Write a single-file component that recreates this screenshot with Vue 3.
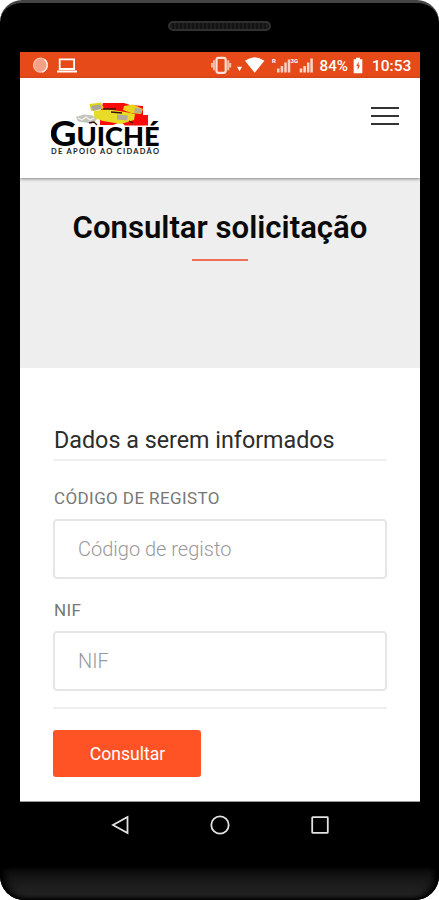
<script setup>
import { ref } from 'vue'

const fields = [
  { id: 'codigo', label: 'CÓDIGO DE REGISTO', placeholder: 'Código de registo' },
  { id: 'nif', label: 'NIF', placeholder: 'NIF' },
]
const values = ref({ codigo: '', nif: '' })
</script>

<template>
  <div class="phone">
    <div class="top-bezel">
      <div class="speaker"></div>
    </div>

    <div class="screen">
      <div class="status">
        <svg class="status-left" width="60" height="26" viewBox="0 0 60 26">
          <circle cx="20.5" cy="13.2" r="7" fill="#f3a288" stroke="#f6c0ae" stroke-width="1.2" />
          <path d="M24.5 7.6a7.2 7.2 0 0 1-2.600 12.500" fill="none" stroke="#ffe9e2" stroke-width="1.4" />
          <path d="M39.700 7.400h14.400v9.600H39.700z" fill="none" stroke="#fff" stroke-width="1.800" />
          <path d="M37 19.600h20" stroke="#fff" stroke-width="2" />
        </svg>
        <svg class="status-right" width="106" height="26" viewBox="0 0 106 26">
          <rect x="6.500" y="5.800" width="9.200" height="15" rx="2" fill="none" stroke="#fbe0d7" stroke-width="2.200" />
          <path d="M4 8.300v10M18.200 8.300v10M2 11v4.500M20.200 11v4.500" stroke="#f7b9a4" stroke-width="2" />
          <path d="M27 14.800h5l-2.500 4.500z" fill="#fff" />
          <path d="M35 8.800q9.700-7 19.400 0L44.700 20.800z" fill="#fff" />
          <text x="62" y="11" class="tiny">R</text>
          <path d="M68.300 20.500v-4M71.900 20.500v-6.500M75.500 20.500V10.500M79 20.500V7.500" stroke="#fad2c5" stroke-width="2.500" />
          <text x="80.500" y="11" class="tiny">3G</text>
          <path d="M91 20.500v-4M94.600 20.500v-6.500M98.200 20.500V10.500M101.600 20.500V6.500" stroke="#fad8cc" stroke-width="2.500" />
        </svg>
        <span class="percent">84%</span>
        <svg class="battery" width="10" height="17" viewBox="0 0 10 17">
          <path d="M3 .8h4v1.500h2.300v14H.700v-14H3z" fill="#fff" />
          <path d="M5.800 4.500 3.200 9h1.500v4L7 8.200H5.500z" fill="#e64a19" />
        </svg>
        <span class="clock">10:53</span>
      </div>

      <header class="header">
        <svg class="logo" width="112" height="58" viewBox="0 0 112 58" role="img" aria-label="Guiché de apoio ao cidadão">
          <path d="M52 3h21l6 2 13 1v9h5v10.500H74L70 22l-8 3H49V12z" fill="#fb0b08" />
          <path d="M38.500 4 50 2.500l3 6-13 2.500z" fill="#e0d41c" />
          <path d="m43 11 13-2 18 3 10 2-1 6-13 4-18-3-9-3z" fill="#e9dc28" />
          <path d="m73 6 9-1.500L92 9l-2 5-10-1-8-3z" fill="#ecd41c" />
          <path d="m40 6 9-1.500 2 4-9 2.500z" fill="#a9a699" />
          <path d="m66 14.500 11 1-1 5-10-1zM84 7.500l7 1.500-1 4.500-7-1z" fill="#b4ae98" />
          <path d="m25 17 8-2.500 9 1 4 4-5 4-14-2z" fill="#c4c4bb" />
          <path d="m27 18 4 2 4-3 4 3 4-2" fill="none" stroke="#f4f4ec" stroke-width="1.300" />
          <path d="M52 9h13M38 23l5-1 3 3M60 12l11 1M78 21l4 2" stroke="#351509" stroke-width="1.300" fill="none" />
          <text x="-1.500" y="46" class="logo-g" textLength="27" lengthAdjust="spacingAndGlyphs">G</text>
          <text x="25.500" y="46" class="logo-name" textLength="83" lengthAdjust="spacingAndGlyphs">UICHÉ</text>
          <text x="0" y="54.200" class="logo-tag" textLength="108" lengthAdjust="spacing">DE APOIO AO CIDADÃO</text>
        </svg>
        <button class="menu" type="button" aria-label="Menu">
          <i></i><i></i><i></i>
        </button>
      </header>

      <section class="hero">
        <h1>Consultar solicitação</h1>
        <div class="rule"></div>
      </section>

      <form class="form" @submit.prevent>
        <h2>Dados a serem informados</h2>
        <div v-for="f in fields" :key="f.id" class="field">
          <label :for="f.id">{{ f.label }}</label>
          <input :id="f.id" v-model="values[f.id]" type="text" :placeholder="f.placeholder" />
        </div>
        <div class="divider"></div>
        <button class="submit" type="submit">Consultar</button>
      </form>
    </div>

    <nav class="nav">
      <svg width="20" height="20" viewBox="0 0 20 20"><path d="M17.500 2v16L3 10z" /></svg>
      <svg width="20" height="20" viewBox="0 0 20 20"><circle cx="10" cy="10" r="8.700" /></svg>
      <svg width="20" height="20" viewBox="0 0 20 20"><rect x="2.200" y="2.200" width="15.600" height="15.600" rx=".5" /></svg>
    </nav>
    <div class="chin"></div>
  </div>
</template>

<style>
body {
  background: #fff;
}
</style>

<style scoped>
.phone {
  box-sizing: border-box;
  width: 439px;
  height: 900px;
  display: flex;
  flex-direction: column;
  background: #000;
  border-radius: 22px 22px 24px 24px;
  border-top: 3px solid #444;
  overflow: hidden;
  font-family: Roboto, "Liberation Sans", sans-serif;
}
.top-bezel {
  height: 49px;
  flex: none;
  display: flex;
  justify-content: center;
  align-items: flex-start;
  padding-top: 18px;
  box-sizing: border-box;
}
.speaker {
  box-sizing: border-box;
  width: 103px;
  height: 10px;
  border: 2px solid #303030;
  border-radius: 5px;
  background: repeating-linear-gradient(90deg, #1e1e1e 0 2px, #141414 2px 4px);
}
.screen {
  box-sizing: border-box;
  flex: none;
  width: 400px;
  height: 750px;
  margin-left: 20px;
  background: #fff;
  border-bottom: 1px solid #999;
  display: flex;
  flex-direction: column;
}
.status {
  height: 26px;
  flex: none;
  background: #e64a19;
  color: #fff;
  display: flex;
  align-items: center;
  font-size: 15.500px;
  line-height: 26px;
  font-weight: 500;
}
.status-right {
  margin-left: 130px;
}
.tiny {
  font: 700 6px Roboto, sans-serif;
  fill: #fff;
}
.percent {
  margin-left: 3.500px;
  width: 33.500px;
  font-size: 15.200px;
  padding-top: 2px;
}
.clock {
  margin-left: 9px;
  padding-top: 2px;
}
.header {
  box-sizing: border-box;
  height: 100px;
  flex: none;
  display: flex;
  justify-content: space-between;
  align-items: flex-start;
  padding: 22px 21px 0 31px;
  position: relative;
  box-shadow: 0 1px 3px rgba(0, 0, 0, 0.45);
}
.logo-g {
  font: 900 34px Lato, "Open Sans", sans-serif;
}
.logo-name {
  font: 900 26px Lato, "Open Sans", sans-serif;
}
.logo-tag {
  font: 700 7.500px Lato, "Open Sans", sans-serif;
  fill: #222;
}
.menu {
  display: flex;
  flex-direction: column;
  gap: 6px;
  width: 28px;
  margin-top: 7px;
  padding: 0;
  border: 0;
  background: none;
}
.menu i {
  height: 2px;
  width: 28px;
  background: #333;
}
.hero {
  box-sizing: border-box;
  height: 190px;
  flex: none;
  background: #eee;
  padding-top: 32px;
  display: flex;
  flex-direction: column;
  align-items: center;
}
h1 {
  margin: 0;
  font-size: 31.150px;
  line-height: 36px;
  font-weight: 600;
  color: #0a0a0a;
  white-space: nowrap;
}
.rule {
  width: 56px;
  height: 2px;
  margin-top: 13px;
  background: #f0705a;
}
.form {
  padding: 57px 33px 0;
}
h2 {
  box-sizing: border-box;
  margin: 0 0 25px;
  height: 36px;
  padding-left: 1px;
  border-bottom: 2px solid #f0f0f0;
  font-size: 23.300px;
  line-height: 30px;
  font-weight: 400;
  color: #2c2c2c;
  white-space: nowrap;
}
label {
  display: block;
  height: 33px;
  padding-left: 1px;
  font-size: 17px;
  line-height: 24px;
  letter-spacing: 0.400px;
  font-weight: 400;
  color: #777;
}
input {
  display: block;
  box-sizing: border-box;
  width: 334px;
  height: 60px;
  margin: 0 0 19px;
  padding: 0 23px;
  border: 2px solid #e6e6e6;
  border-radius: 4px;
  outline: none;
  font: 300 20px Roboto, sans-serif;
  background: #fff;
}
input::placeholder {
  color: #999;
  opacity: 1;
}
.divider {
  height: 2px;
  margin-top: -3px;
  background: #eee;
}
.submit {
  display: block;
  width: 148px;
  height: 47px;
  margin-top: 21px;
  padding: 0 0 0 1px;
  border: 0;
  border-radius: 3px;
  background: #ff5225;
  color: #fff;
  font: 400 17.600px Roboto, sans-serif;
}
.nav {
  height: 65px;
  flex: none;
  box-sizing: border-box;
  padding: 13px 109px 0 110px;
  display: flex;
  justify-content: space-between;
  align-items: flex-start;
}
.nav svg {
  fill: none;
  stroke: #e2e2e2;
  stroke-width: 1.800;
}
.chin {
  flex: 1;
  border-radius: 0 0 24px 24px;
  background: linear-gradient(#0d0d0d, #282828);
  box-shadow: inset 0 -1px 2px #000, inset 5px 0 7px #000, inset -5px 0 7px #000;
}
</style>
